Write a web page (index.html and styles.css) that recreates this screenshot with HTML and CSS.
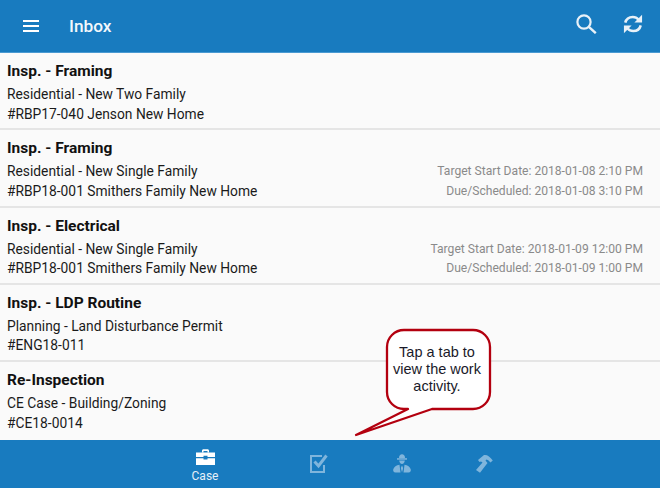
FILE: index.html
```html
<!DOCTYPE html>
<html lang="en">
<head>
<meta charset="utf-8">
<title>Inbox</title>
<link rel="stylesheet" href="styles.css">
</head>
<body>
<div class="app">
  <header class="topbar">
    <svg class="menu" width="18" height="14" viewBox="0 0 18 14"><path d="M1 2h16M1 7h16M1 12h16" stroke="#fff" stroke-width="2"/></svg>
    <h1 class="title">Inbox</h1>
    <svg class="search" width="21" height="20" viewBox="0 0 21 20"><circle cx="8" cy="8" r="6.600" fill="none" stroke="#e8f1f8" stroke-width="2.200"/><path d="M12.800 12.800l7 6.400" stroke="#e8f1f8" stroke-width="2.400"/></svg>
    <svg class="refresh" width="20" height="20" viewBox="0 0 22 22"><path d="M2.500 9.500C3.500 5.500 6.800 3.200 10.800 3.200c2.600 0 4.700 1 6.200 2.800" fill="none" stroke="#e8f1f8" stroke-width="2.800"/><path d="M21 .8v8.500h-8.500z" fill="#e8f1f8"/><path d="M19.500 12.500c-1 4-4.300 6.300-8.300 6.300-2.600 0-4.700-1-6.200-2.800" fill="none" stroke="#e8f1f8" stroke-width="2.800"/><path d="M1 21.200v-8.500h8.500z" fill="#e8f1f8"/></svg>
  </header>
  <main class="list">
    <article class="row">
      <div class="info"><h2>Insp. - Framing</h2><p>Residential - New Two Family</p><p>#RBP17-040 Jenson New Home</p></div>
    </article>
    <article class="row">
      <div class="info"><h2>Insp. - Framing</h2><p>Residential - New Single Family</p><p>#RBP18-001 Smithers Family New Home</p></div>
      <div class="dates"><p>Target Start Date: 2018-01-08 2:10 PM</p><p>Due/Scheduled: 2018-01-08 3:10 PM</p></div>
    </article>
    <article class="row">
      <div class="info"><h2>Insp. - Electrical</h2><p>Residential - New Single Family</p><p>#RBP18-001 Smithers Family New Home</p></div>
      <div class="dates"><p>Target Start Date: 2018-01-09 12:00 PM</p><p>Due/Scheduled: 2018-01-09 1:00 PM</p></div>
    </article>
    <article class="row">
      <div class="info"><h2>Insp. - LDP Routine</h2><p>Planning - Land Disturbance Permit</p><p>#ENG18-011</p></div>
    </article>
    <article class="row last">
      <div class="info"><h2>Re-Inspection</h2><p>CE Case - Building/Zoning</p><p>#CE18-0014</p></div>
    </article>
  </main>
  <nav class="tabs">
    <div class="tab active">
      <svg width="19" height="16" viewBox="0 0 19 16"><path d="M6 3.500V1.800C6 .8 6.700.3 7.500.3h4c.8 0 1.500.5 1.500 1.500v1.700h-1.500V1.900h-4v1.600z" fill="#fff"/><path d="M0 3.500h19V8h-7.500V6.800h-4V8H0z" fill="#fff"/><path d="M0 9.300h7.500v1.300h4V9.300H19V16H0z" fill="#fff"/></svg>
      <span>Case</span>
    </div>
    <div class="tab">
      <svg width="18" height="19" viewBox="0 0 18 19"><path d="M14 11v7H1V2h11" fill="none" stroke="#7fb5dc" stroke-width="2"/><path d="M4.500 7.500l4 4.500L16.500 1.500" fill="none" stroke="#7fb5dc" stroke-width="3"/></svg>
    </div>
    <div class="tab">
      <svg width="18" height="19" viewBox="0 0 18 19"><path d="M6 4C6 1.600 7.300.3 9 .3S12 1.600 12 4z" fill="#7fb5dc"/><rect x="4" y="4.200" width="10" height="1.500" fill="#7fb5dc"/><path d="M6.200 6.500h5.600C11.500 8.500 10.500 10 9 10S6.500 8.500 6.200 6.500z" fill="#7fb5dc"/><path d="M6.500 10.800L7.500 18.500H2.500C.5 18.500 0 17 .2 15.500.8 13 3.500 11.300 6.500 10.800zM11.500 10.800L10.500 18.500h5c2 0 2.500-1.500 2.300-3C17.200 13 14.500 11.300 11.500 10.800z" fill="#7fb5dc"/><path d="M9 11.500l1.200 2.500L9 18.500 7.800 14z" fill="#7fb5dc"/></svg>
    </div>
    <div class="tab">
      <svg width="18" height="19" viewBox="0 0 18 19"><path d="M3 6L9 1Q13.500.2 17.800 6.500L15.500 8.500Q13 5.500 11.500 5.500L10.500 6.500 12.500 9 5 18.800 1 16 7.500 8.500 6 7.500 4.500 8z" fill="#7fb5dc"/></svg>
    </div>
  </nav>
  <aside class="callout">
    <svg class="bubble" width="140" height="112" viewBox="0 0 140 112"><path d="M50 2h69a17 17 0 0 1 17 17v45a17 17 0 0 1-17 17H78L2 107l52-26h-4a17 17 0 0 1-17-17V19a17 17 0 0 1 17-17z" fill="#fff" stroke="#b3000f" stroke-width="2.300" stroke-linejoin="round"/></svg>
    <p class="tip">Tap a tab to view the work activity.</p>
  </aside>
</div>
</body>
</html>
```

FILE: styles.css
```css
* { box-sizing: border-box; }
html, body { margin: 0; padding: 0; }
body { font-family: Roboto, "Liberation Sans", sans-serif; background: #fafafa; }
.app { position: relative; width: 660px; height: 488px; display: flex; flex-direction: column; overflow: hidden; }
.topbar { height: 53px; flex: none; display: flex; align-items: center; background: #187bbf; border-bottom: 1px solid #4a9ad2; color: #fff; padding: 0 17px 1px 22px; }
.title { margin: 0 0 0 29px; font-size: 17.300px; font-weight: 500; flex: 1; color: #f3f8fc; }
.search { margin-right: 26px; margin-top: -3px; }
.refresh { margin-top: -3px; }
.list { flex: 1; display: flex; flex-direction: column; }
.row { height: 77.300px; flex: none; display: flex; justify-content: space-between; padding: 9px 17px 0 7px; border-bottom: 2px solid #e5e5e5; }
.row.last { border-bottom: 0; }
.info h2 { margin: 0 0 4px; font-size: 15.500px; line-height: 19px; font-weight: 700; color: #111; }
.info p { margin: 0; font-size: 13.800px; line-height: 19.500px; color: #1a1a1a; }
.dates { padding-top: 23px; text-align: right; }
.dates p { margin: 0; font-size: 12.100px; line-height: 19.500px; color: #8a8a8a; }
.tabs { height: 48px; flex: none; display: flex; background: #187bbf; padding-left: 132px; }
.tab { width: 82.500px; display: flex; flex-direction: column; align-items: center; padding-top: 14px; color: #e6f0f8; font-size: 12px; }
.tab span { margin-top: 3px; line-height: 16px; }
.tab.active { width: 146px; padding-top: 9px; }
.callout { position: absolute; left: 354px; top: 328px; width: 140px; height: 112px; }
.bubble { position: absolute; left: 0; top: 0; }
.tip { position: absolute; left: 35px; top: 15.500px; width: 96px; margin: 0; font-family: "Liberation Sans", sans-serif; font-size: 14.500px; line-height: 17px; text-align: center; color: #1a1a2a; }
```
